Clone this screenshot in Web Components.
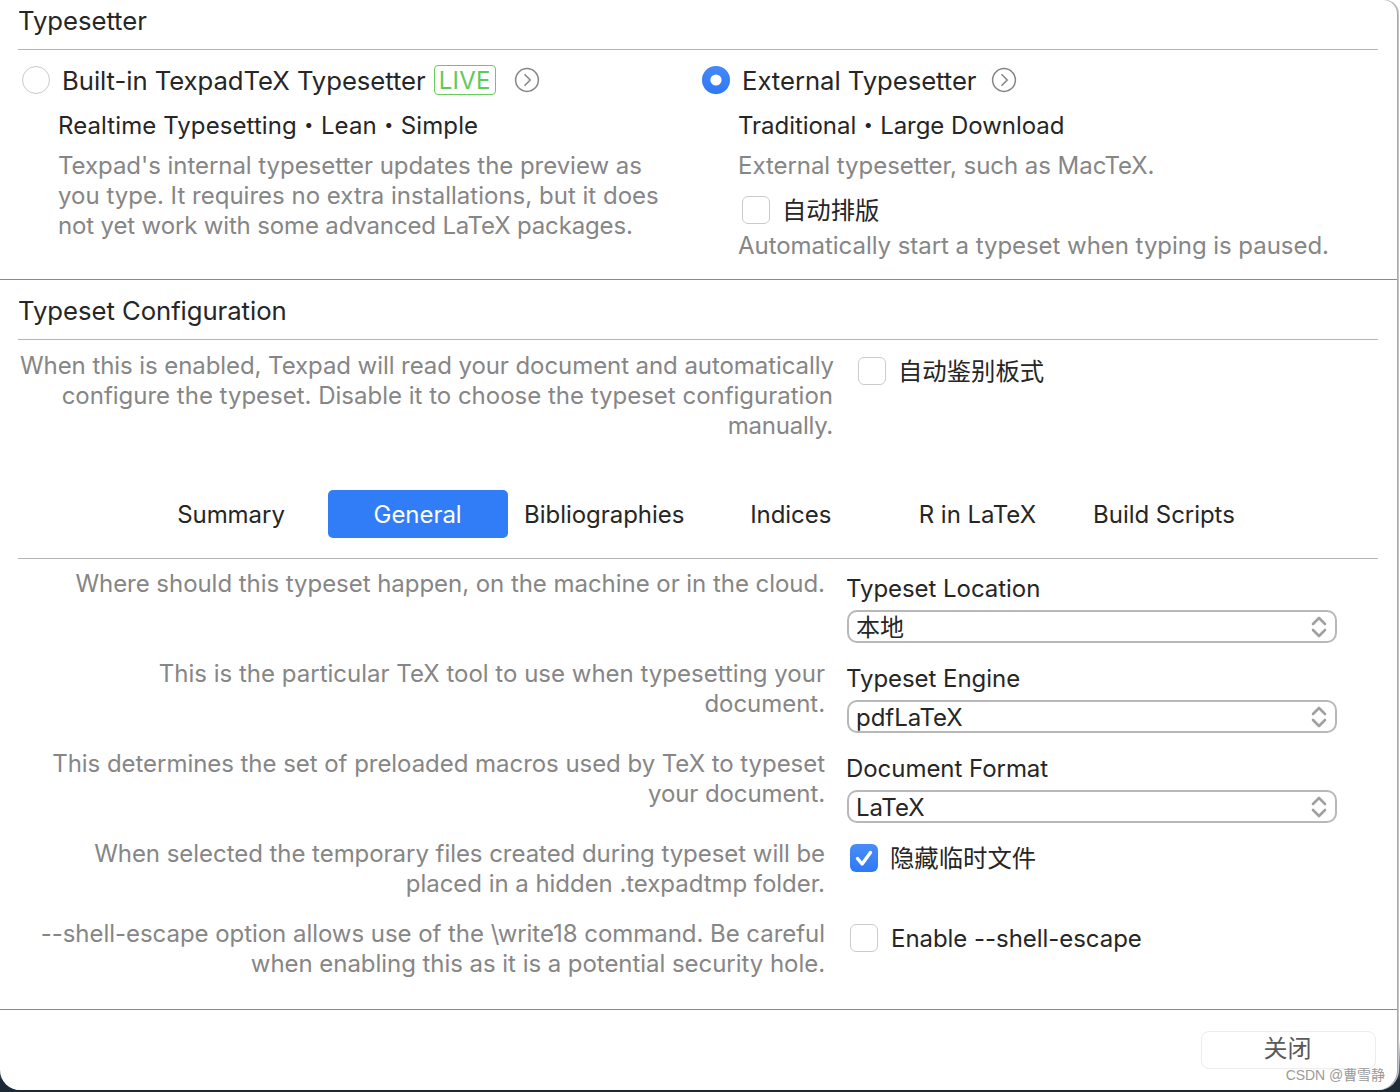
<!DOCTYPE html>
<html lang="zh"><head><meta charset="utf-8"><title>Typesetter</title>
<style>
html,body{margin:0;padding:0;background:linear-gradient(#fff 0,#fff 1040px,#1c2a36 1080px);}
body{width:1400px;height:1092px;overflow:hidden;font-family:Inter,"Noto Sans CJK SC",sans-serif;font-size:24px;letter-spacing:-.045px;color:#262626;}
x-note span{display:inline}
</style></head><body>
<x-window>
  <x-section style="--h:279px">
    <x-head>Typesetter</x-head>
    <x-engines>
      <x-engine slot="left">
        <x-radio slot="control"></x-radio>
        <span slot="label">Built-in TexpadTeX Typesetter</span>
        <x-live slot="badge">LIVE</x-live>
        <x-go slot="go"></x-go>
        <x-sub style="letter-spacing:.09px">Realtime Typesetting・Lean・Simple</x-sub>
        <x-note style="--mt:10px">Texpad's internal typesetter updates the preview as<br><span style="letter-spacing:.01px">you type. It requires no extra installations, but it does</span><br><span style="letter-spacing:-.15px">not yet work with some advanced LaTeX packages.</span></x-note>
      </x-engine>
      <x-engine slot="right" style="--go:14px">
        <x-radio slot="control" checked></x-radio>
        <span slot="label">External Typesetter</span>
        <x-go slot="go"></x-go>
        <x-sub>Traditional・Large Download</x-sub>
        <x-note style="--mt:10px">External typesetter, such as MacTeX.</x-note>
        <x-check style="--mt:15px;--ml:4px">自动排版</x-check>
        <x-note style="--mt:7px">Automatically start a typeset when typing is paused.</x-note>
      </x-engine>
    </x-engines>
  </x-section>
  <x-section style="--h:729px">
    <x-head style="margin-top:10px;height:50px">Typeset Configuration</x-head>
    <x-auto>
      <x-note slot="text" style="--mt:0;--ta:right"><span style="letter-spacing:-.075px">When this is enabled, Texpad will read your document and automatically</span><br><span style="letter-spacing:-.005px">configure the typeset. Disable it to choose the typeset configuration</span><br><span style="letter-spacing:-.25px">manually.</span></x-note>
      <x-check slot="control" style="--mt:6px">自动鉴别板式</x-check>
    </x-auto>
    <x-tabs>
      <x-tab>Summary</x-tab>
      <x-tab active>General</x-tab>
      <x-tab>Bibliographies</x-tab>
      <x-tab>Indices</x-tab>
      <x-tab>R in LaTeX</x-tab>
      <x-tab>Build Scripts</x-tab>
    </x-tabs>
    <x-settings>
      <x-row>
        <x-note slot="text" style="--mt:0;--ta:right">Where should this typeset happen, on the machine or in the cloud.</x-note>
        <x-select label="Typeset Location" value="本地"></x-select>
      </x-row>
      <x-row>
        <x-note slot="text" style="--mt:0;--ta:right"><span style="letter-spacing:.005px">This is the particular TeX tool to use when typesetting your</span><br>document.</x-note>
        <x-select label="Typeset Engine" value="pdfLaTeX"></x-select>
      </x-row>
      <x-row>
        <x-note slot="text" style="--mt:0;--ta:right">This determines the set of preloaded macros used by TeX to typeset<br><span style="letter-spacing:-.1px">your document.</span></x-note>
        <x-select label="Document Format" value="LaTeX"></x-select>
      </x-row>
      <x-row style="height:80px">
        <x-note slot="text" style="--mt:0;--ta:right">When selected the temporary files created during typeset will be<br>placed in a hidden .texpadtmp folder.</x-note>
        <x-check checked style="--mt:5px;--ml:3px">隐藏临时文件</x-check>
      </x-row>
      <x-row>
        <x-note slot="text" style="--mt:0;--ta:right">--shell-escape option allows use of the \write18 command. Be careful<br>when enabling this as it is a potential security hole.</x-note>
        <x-check latin style="--mt:5px;--ml:3px">Enable --shell-escape</x-check>
      </x-row>
    </x-settings>
  </x-section>
  <x-footer><x-button>关闭</x-button></x-footer>
  <x-mark>CSDN @曹雪静</x-mark>
</x-window>
<script>
function def(name, css, html, init){
  customElements.define(name, class extends HTMLElement{
    constructor(){super();const r=this.attachShadow({mode:'open'});r.innerHTML='<style>'+css+'</style>'+html;}
    connectedCallback(){if(init)init.call(this,this.shadowRoot);}
  });
}
def('x-window',`:host{display:flex;flex-direction:column;position:relative;box-sizing:border-box;width:1397px;height:1090px;background:#fff;border-top-right-radius:14px;border-bottom-left-radius:20px;border-bottom-right-radius:20px;box-shadow:1px 0 0 #a9a9a9,2px 0 0 #c4c4c4}`,`<slot></slot>`);
def('x-section',`:host{display:block;box-sizing:border-box;height:calc(var(--h) + 1px);border-bottom:1px solid #8a8a8a}`,`<slot></slot>`);
def('x-head',`:host{display:block;box-sizing:border-box;height:50px;margin:0 19px 0 18px;padding-left:0;font-size:25.7px;line-height:42px;border-bottom:1px solid #b4b4b4;color:#262626}`,`<slot></slot>`);
def('x-engines',`:host{display:grid;grid-template-columns:680px 1fr;padding:15px 0 0 22px}`,`<slot name="left"></slot><slot name="right"></slot>`);
def('x-engine',`:host{display:block}
.top{display:flex;align-items:center;height:30px}
.lab{margin-left:12px;white-space:nowrap;font-size:25.7px;letter-spacing:-.05px}
.body{padding-left:36px;margin-left:0}
::slotted(x-live){margin-left:8px}
::slotted(x-go){margin-left:var(--go,18px)}`,`<div class="top"><slot name="control"></slot><span class="lab"><slot name="label"></slot></span><slot name="badge"></slot><slot name="go"></slot></div><div class="body"><slot></slot></div>`);
def('x-radio',`:host{display:block;width:28px;height:28px;flex:none}svg{display:block;overflow:visible}`,`<svg width="28" height="28" viewBox="0 0 28 28"></svg>`,function(r){
  r.querySelector('svg').innerHTML=this.hasAttribute('checked')
   ?'<defs><linearGradient id="g" x1="0" y1="0" x2="0" y2="1"><stop offset="0" stop-color="#4589f8"/><stop offset="1" stop-color="#2f78f6"/></linearGradient></defs><circle cx="14" cy="14.4" r="14" fill="#cfe0fb"/><circle cx="14" cy="14" r="14" fill="url(#g)"/><circle cx="14" cy="14" r="5.6" fill="#fff"/>'
   :'<circle cx="14" cy="14" r="13.5" fill="#fff" stroke="#c9c9c9"/>';
});
def('x-live',`:host{display:block;box-sizing:border-box;width:62px;height:30px;border:1px solid #66cf5c;border-radius:4px;color:#5fcb55;line-height:29px;text-align:center;font-size:24px;letter-spacing:.2px}`,`<slot></slot>`);
def('x-go',`:host{display:block;width:26px;height:26px;flex:none}svg{display:block}`,`<svg width="26" height="26" viewBox="0 0 26 26" fill="none" stroke="#858585"><circle cx="13" cy="13" r="11.4" stroke-width="1.5"/><path d="M10.5 7.2 16.2 13l-5.7 5.8" stroke-width="1.5"/></svg>`);
def('x-sub',`:host{display:block;margin-top:16px;line-height:30px;white-space:nowrap;color:#262626}`,`<slot></slot>`);
def('x-note',`:host{display:block;margin-top:var(--mt,0);line-height:30px;white-space:nowrap;color:#868686;text-align:var(--ta,left)}`,`<slot></slot>`);
def('x-check',`:host{display:flex;align-items:center;height:28px;margin-top:var(--mt,0);margin-left:var(--ml,0);color:#262626;white-space:nowrap}
.b{box-sizing:border-box;width:28px;height:28px;border-radius:6px;border:1px solid #cbcbcb;background:#fff;flex:none;margin-right:12px}
.t{padding-bottom:4px;font-size:24.4px}
:host([latin]) .b{margin-right:13px}
:host([latin]) .t{padding-bottom:0;font-size:24px}
.b.on{border:0;background:linear-gradient(#4a8cf8,#2f78f6)}svg{display:block}`,`<span class="b"></span><span class="t"><slot></slot></span>`,function(r){
  if(this.hasAttribute('checked')){const b=r.querySelector('.b');b.classList.add('on');b.innerHTML='<svg width="28" height="28" viewBox="0 0 28 28" fill="none"><path d="M7.5 14.5l4.6 5.5L20.5 8.5" stroke="#fff" stroke-width="3.4" stroke-linecap="round" stroke-linejoin="round"/></svg>';}
});
def('x-auto',`:host{display:grid;grid-template-columns:813px 1fr;column-gap:25px;padding:11px 0 0 20px;height:150px;box-sizing:border-box}`,`<slot name="text"></slot><slot name="control"></slot>`);
def('x-tabs',`:host{display:grid;grid-template-columns:repeat(6,180px);column-gap:6.6px;padding:0 0 20px 123px;box-sizing:border-box;height:69px;margin:0 19px 0 18px;border-bottom:1px solid #b4b4b4}`,`<slot></slot>`);
def('x-tab',`:host{display:block;height:48px;line-height:50px;text-align:center;border-radius:5px;color:#262626}:host([active]){background:#317cf7;color:#fff}`,`<slot></slot>`);
def('x-settings',`:host{display:block;padding-top:10px}`,`<slot></slot>`);
def('x-row',`:host{display:grid;grid-template-columns:825px 490px;column-gap:22px;height:90px;box-sizing:border-box}`,`<slot name="text"></slot><slot></slot>`);
def('x-select',`:host{display:block;padding-top:5px}
.l{line-height:30px;color:#262626;margin-left:-1px}
.s{display:flex;align-items:center;justify-content:space-between;box-sizing:border-box;height:33px;margin-top:6px;padding:0 8px 0 7px;border:2px solid #b8b8b8;border-radius:10px;background:#fff;color:#262626;line-height:1}
.v{padding-top:2px}
svg{display:block}`,`<div class="l"></div><div class="s"><span class="v"></span><svg width="16" height="24" viewBox="0 0 16 24" fill="none" stroke="#a0a0a0" stroke-width="2.6" stroke-linecap="round" stroke-linejoin="round"><path d="M2 9 8 3l6 6M2 15l6 6 6-6"/></svg></div>`,function(r){
  r.querySelector('.l').textContent=this.getAttribute('label');r.querySelector('.v').textContent=this.getAttribute('value');
});
def('x-footer',`:host{display:flex;justify-content:flex-end;padding:21px 21px 0 0}`,`<slot></slot>`);
def('x-button',`:host{display:block;box-sizing:border-box;width:175px;height:38px;border:1px solid #ececec;border-radius:8px;background:#fff;color:#5a5a5a;text-align:center;line-height:34px;padding-right:2px}`,`<slot></slot>`);
def('x-mark',`:host{position:absolute;right:12px;bottom:6px;font-family:"Liberation Sans","Noto Sans CJK SC",sans-serif;font-size:14px;line-height:18px;color:#9a9a9a}`,`<slot></slot>`);
</script>
</body></html>
